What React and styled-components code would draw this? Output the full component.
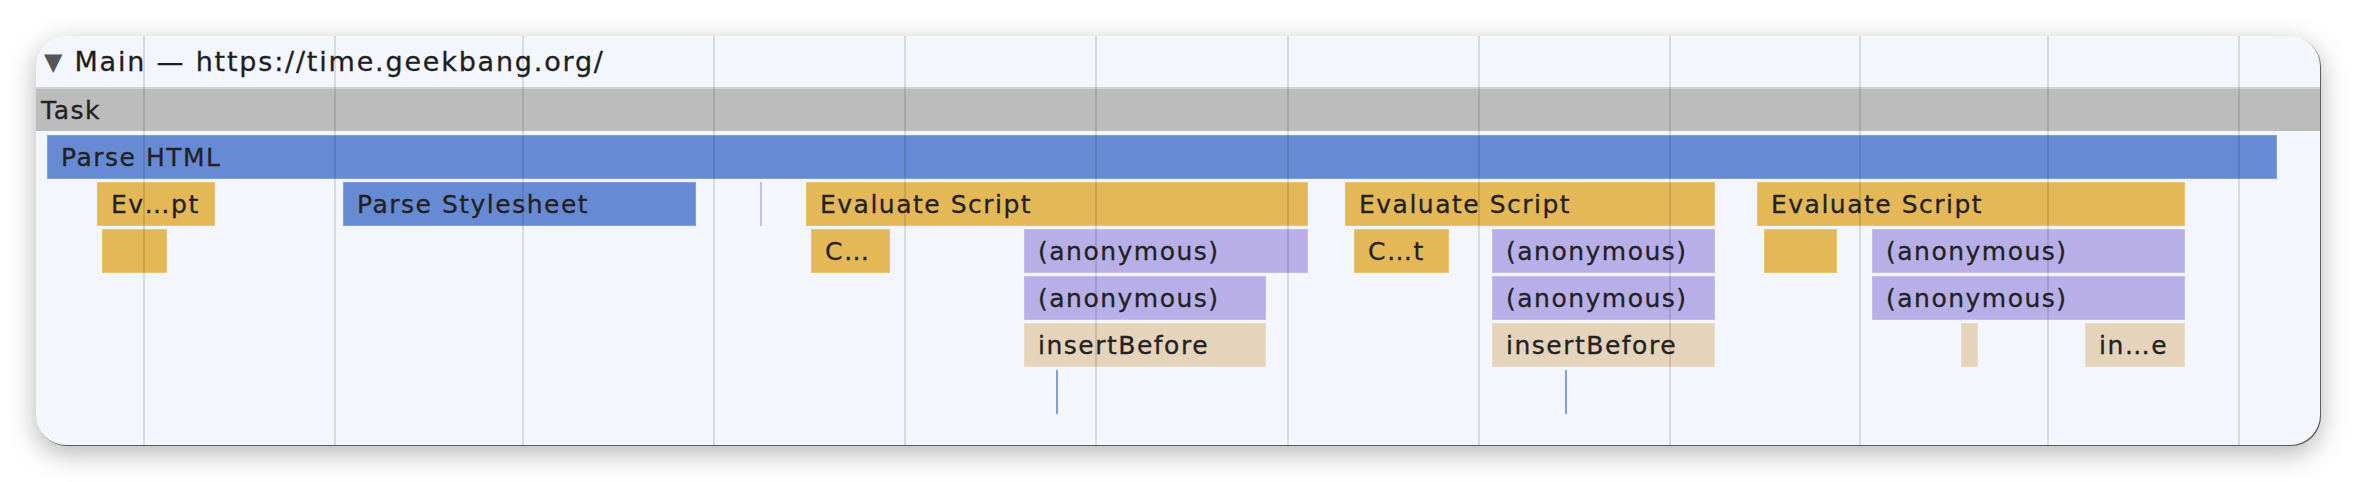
import React from 'react';
import styled, { createGlobalStyle } from 'styled-components';

const GlobalStyle = createGlobalStyle`
    html, body {
        margin: 0;
        background: #ffffff;
    }
    body {
        font-family: "DejaVu Sans", "Liberation Sans", sans-serif;
    }
`;

const COLORS = {
    task: '#bcbcbc',
    parse: '#668bd4',
    script: '#e4b856',
    js: '#b8afe8',
    dom: '#e5d3bb',
};

const GRID = [107, 298, 486, 677, 868, 1059, 1251, 1442, 1633, 1823, 2011, 2202];

const ROWS = [
    [{ left: 11, width: 2230, kind: 'parse', label: 'Parse HTML' }],
    [
        { left: 61, width: 118, kind: 'script', label: 'Ev…pt' },
        { left: 307, width: 353, kind: 'parse', label: 'Parse Stylesheet' },
        { left: 724, width: 2, kind: 'js' },
        { left: 770, width: 502, kind: 'script', label: 'Evaluate Script' },
        { left: 1309, width: 370, kind: 'script', label: 'Evaluate Script' },
        { left: 1721, width: 428, kind: 'script', label: 'Evaluate Script' },
    ],
    [
        { left: 66, width: 65, kind: 'script' },
        { left: 775, width: 79, kind: 'script', label: 'C…' },
        { left: 988, width: 284, kind: 'js', label: '(anonymous)' },
        { left: 1318, width: 95, kind: 'script', label: 'C…t' },
        { left: 1456, width: 223, kind: 'js', label: '(anonymous)' },
        { left: 1728, width: 73, kind: 'script' },
        { left: 1836, width: 313, kind: 'js', label: '(anonymous)' },
    ],
    [
        { left: 988, width: 242, kind: 'js', label: '(anonymous)' },
        { left: 1456, width: 223, kind: 'js', label: '(anonymous)' },
        { left: 1836, width: 313, kind: 'js', label: '(anonymous)' },
    ],
    [
        { left: 988, width: 242, kind: 'dom', label: 'insertBefore' },
        { left: 1456, width: 223, kind: 'dom', label: 'insertBefore' },
        { left: 1925, width: 17, kind: 'dom' },
        { left: 2049, width: 100, kind: 'dom', label: 'in…e' },
    ],
    [
        { left: 1020, width: 2, kind: 'parse' },
        { left: 1529, width: 2, kind: 'parse' },
    ],
];

const Page = styled.div`
    padding: 36px 0 0 36px;
    height: 482px;
    box-sizing: border-box;
`;

const Card = styled.div`
    position: relative;
    width: 2284px;
    height: 409px;
    border-radius: 30px;
    overflow: hidden;
    background: #f3f6fd;
    box-shadow: 1px 1px 0 #5e5e5e, 0 8px 28px rgba(0, 0, 0, 0.3);
`;

const Header = styled.div`
    display: flex;
    align-items: center;
    gap: 12px;
    height: 51px;
    padding: 0 0 0 8px;
    box-sizing: border-box;
    font-size: 27px;
    letter-spacing: 1.8px;
    color: #1e1e1e;
    -webkit-text-stroke: 0.3px #1e1e1e;
`;

const Caret = styled.span`
    font-size: 24px;
    color: #555555;
    letter-spacing: 0;
    -webkit-text-stroke: 0;
`;

const Track = styled.div`
    display: flex;
    flex-direction: column;
    gap: 3px;
`;

const TaskBar = styled.div`
    height: 44px;
    margin-bottom: 1px;
    display: flex;
    align-items: center;
    padding-left: 5px;
    background: ${COLORS.task};
    border-top: 2px solid #cfd1d4;
    box-sizing: border-box;
    font-size: 25px;
    letter-spacing: 1.5px;
    color: #222222;
    -webkit-text-stroke: 0.3px #222222;
`;

const Row = styled.div`
    position: relative;
    height: 44px;
`;

const Bar = styled.div`
    position: absolute;
    top: 0;
    bottom: 0;
    display: flex;
    align-items: center;
    padding-left: 14px;
    box-sizing: border-box;
    overflow: hidden;
    white-space: nowrap;
    background: ${(p) => COLORS[p.$kind]};
    box-shadow: inset 0 0 0 1px rgba(255, 255, 255, 0.18);
    font-size: 25px;
    letter-spacing: 1.5px;
    color: #222222;
    -webkit-text-stroke: 0.3px #222222;
`;

const GridLayer = styled.div`
    position: absolute;
    inset: 0;
    pointer-events: none;
`;

const GridLine = styled.div`
    position: absolute;
    top: 0;
    bottom: 0;
    width: 2px;
    background: rgba(20, 30, 50, 0.13);
`;

const App = () => {
    return (
        <Page>
            <GlobalStyle />
            <Card>
                <Header>
                    <Caret>▼</Caret>
                    <span>Main — https://time.geekbang.org/</span>
                </Header>
                <Track>
                    <TaskBar>Task</TaskBar>
                    {ROWS.map((row, i) => (
                        <Row key={i}>
                            {row.map((b, j) => (
                                <Bar
                                    key={j}
                                    $kind={b.kind}
                                    style={{ left: b.left, width: b.width, paddingLeft: b.width < 20 ? 0 : undefined }}
                                >
                                    {b.label}
                                </Bar>
                            ))}
                        </Row>
                    ))}
                </Track>
                <GridLayer>
                    {GRID.map((x) => (
                        <GridLine key={x} style={{ left: x }} />
                    ))}
                </GridLayer>
            </Card>
        </Page>
    );
};

export default App;
